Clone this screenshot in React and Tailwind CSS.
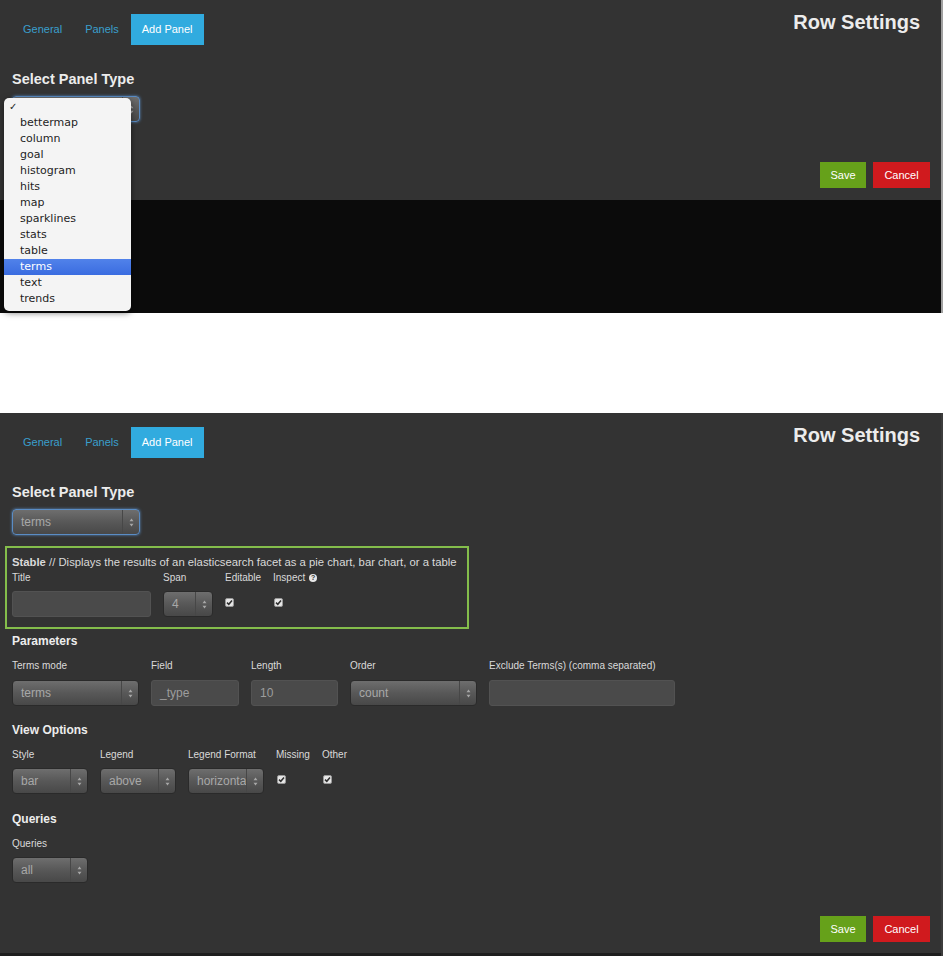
import React from "react";

const tabs = ["General", "Panels", "Add Panel"];
const panelTypes = [
  "bettermap",
  "column",
  "goal",
  "histogram",
  "hits",
  "map",
  "sparklines",
  "stats",
  "table",
  "terms",
  "text",
  "trends",
];

function Tabs() {
  return (
    <div className="flex gap-px">
      {tabs.map((t) => (
        <div
          key={t}
          className={`h-[31px] px-[11px] flex items-center text-[11px] ${
            t === "Add Panel" ? "bg-[#31abdf] text-white" : "text-[#3a9fcd]"
          }`}
        >
          {t}
        </div>
      ))}
    </div>
  );
}

function Header() {
  return (
    <div className="flex justify-between items-start">
      <Tabs />
      <h3 className="mr-[10px] -mt-[4px] text-[20px] leading-[24px] font-bold text-[#ececec]">
        Row Settings
      </h3>
    </div>
  );
}

function Arrows() {
  return (
    <svg width="5" height="9" viewBox="0 0 5 9">
      <path d="M2.5 0.5 L4.5 3.3 L0.5 3.3 Z" fill="#a8a8a8" />
      <path d="M2.5 8.5 L4.5 5.7 L0.5 5.7 Z" fill="#a8a8a8" />
    </svg>
  );
}

function Select({ value, className = "", focus = false }) {
  return (
    <div
      className={`flex items-stretch h-[26px] rounded-[4px] border overflow-hidden ${
        focus ? "border-[#5a8cc4] shadow-[0_0_3px_#5a8cc4]" : "border-[#2a2a2a]"
      } bg-linear-to-b from-[#6e6e6e] via-[#585858] to-[#484848] ${className}`}
    >
      <span className="flex-1 min-w-0 whitespace-nowrap pl-[8px] text-[12px] leading-[24px] text-[#a8a8a8]">
        {value}
      </span>
      <span className="w-[17px] shrink-0 border-l border-[#474747] flex items-center justify-center">
        <Arrows />
      </span>
    </div>
  );
}

function Input({ value = "", className = "" }) {
  return (
    <div
      className={`h-[26px] rounded-[3px] border border-[#525252] bg-[#4a4a4a] pl-[8px] text-[12px] leading-[24px] text-[#9d9d9d] ${className}`}
    >
      {value}
    </div>
  );
}

function Check() {
  return (
    <svg width="9" height="9" viewBox="0 0 9 9">
      <rect x="0.5" y="0.5" width="8" height="8" rx="1.5" fill="#e6e6e6" stroke="#9a9a9a" />
      <path d="M2 4.6 L3.8 6.3 L7 2.5" stroke="#2e2e2e" strokeWidth="1.5" fill="none" />
    </svg>
  );
}

function Label({ children }) {
  return <div className="text-[10px] leading-[14px] text-[#dadada] whitespace-nowrap">{children}</div>;
}

function Field({ label, width, gap = "mt-[7px]", children }) {
  return (
    <div className={width}>
      <Label>{label}</Label>
      <div className={gap}>{children}</div>
    </div>
  );
}

function CheckField({ label, width, offset, gap = "mt-[7px]" }) {
  return (
    <div className={width}>
      <Label>{label}</Label>
      <div className={`${gap} h-[26px] flex items-center pb-[4px] ${offset}`}>
        <Check />
      </div>
    </div>
  );
}

function Heading({ children, className = "" }) {
  return (
    <div className={`text-[12px] leading-[14px] font-bold text-[#ededed] ${className}`}>{children}</div>
  );
}

function Buttons({ className = "" }) {
  return (
    <div className={`flex justify-end gap-[7px] ${className}`}>
      <button className="w-[46px] h-[26px] bg-[#66a11a] text-white text-[11px]">Save</button>
      <button className="w-[57px] h-[26px] bg-[#d01a1e] text-white text-[11px]">Cancel</button>
    </div>
  );
}

function Menu() {
  return (
    <div className="absolute left-[4px] top-[98px] w-[127px] pt-[1px] pb-[4px] rounded-[5px] bg-[#f4f4f4] shadow-[0_2px_6px_rgba(0,0,0,0.5)] font-['DejaVu_Sans',sans-serif] text-[11px] text-[#1e1e1e]">
      <div className="h-[16px] leading-[16px] pl-[5px] text-[10px]">✓</div>
      {panelTypes.map((p) => (
        <div
          key={p}
          className={`h-[16px] leading-[16px] pl-[16px] ${
            p === "terms" ? "bg-linear-to-b from-[#5182ea] to-[#3a6ce0] text-white" : ""
          }`}
        >
          {p}
        </div>
      ))}
    </div>
  );
}

function TopPanel() {
  return (
    <div className="relative w-[943px] h-[313px] border-r-2 border-[#a0a0a0] flex flex-col">
      <div className="h-[200px] bg-[#333333] pl-3 pr-[11px] pt-[14px] flex flex-col">
        <Header />
        <div className="mt-[25px] text-[14.5px] leading-[18px] font-bold text-[#ececec]">
          Select Panel Type
        </div>
        <Select className="mt-[8px] w-[128px]" focus value="" />
        <Buttons className="mt-auto mb-[12px]" />
      </div>
      <div className="flex-1 bg-[#0b0b0b]" />
      <Menu />
    </div>
  );
}

function BottomPanel() {
  return (
    <div className="w-[943px] h-[543px] border-r-2 border-[#3c3c3c] flex flex-col">
      <div className="h-[540px] bg-[#333333] pl-3 pr-[11px] pt-[14px] flex flex-col">
        <Header />
        <div className="mt-[25px] text-[14.5px] leading-[18px] font-bold text-[#ececec]">
          Select Panel Type
        </div>
        <Select className="mt-[8px] w-[128px]" focus value="terms" />

        <div className="mt-[11px] -ml-[7px] w-[464px] h-[83px] border-2 border-[#84bd4b] pt-[7px] pl-[5px]">
          <div className="text-[11.3px] leading-[14px] text-[#dadada] whitespace-nowrap">
            <span className="font-bold">Stable</span> // Displays the results of an elasticsearch facet as a pie chart, bar chart, or a table
          </div>
          <div className="mt-[2px] flex gap-3">
            <Field label="Title" width="w-[139px]" gap="mt-[6px]">
              <Input />
            </Field>
            <Field label="Span" width="w-[50px]" gap="mt-[6px]">
              <Select value="4" />
            </Field>
            <CheckField label="Editable" width="w-[36px]" offset="pl-0" gap="mt-[6px]" />
            <div>
              <div className="flex items-center gap-[4px]">
                <Label>Inspect</Label>
                <span className="w-[8px] h-[8px] rounded-full bg-[#e8e8e8] text-[#333] text-[7px] leading-[8px] font-bold flex items-center justify-center">
                  ?
                </span>
              </div>
              <div className="mt-[6px] h-[26px] flex items-center pb-[4px] pl-[1px]">
                <Check />
              </div>
            </div>
          </div>
        </div>

        <Heading className="mt-[5px]">Parameters</Heading>
        <div className="mt-[11px] flex gap-3">
          <Field label="Terms mode" width="w-[127px]">
            <Select value="terms" />
          </Field>
          <Field label="Field" width="w-[88px]">
            <Input value="_type" />
          </Field>
          <Field label="Length" width="w-[87px]">
            <Input value="10" />
          </Field>
          <Field label="Order" width="w-[127px]">
            <Select value="count" />
          </Field>
          <Field label="Exclude Terms(s) (comma separated)" width="w-[186px]">
            <Input />
          </Field>
        </div>

        <Heading className="mt-[17px]">View Options</Heading>
        <div className="mt-[11px] flex gap-3">
          <Field label="Style" width="w-[76px]" gap="mt-[6px]">
            <Select value="bar" />
          </Field>
          <Field label="Legend" width="w-[76px]" gap="mt-[6px]">
            <Select value="above" />
          </Field>
          <Field label="Legend Format" width="w-[76px]" gap="mt-[6px]">
            <Select value="horizonta" />
          </Field>
          <CheckField label="Missing" width="w-[34px]" offset="pl-[1px]" gap="mt-[6px]" />
          <CheckField label="Other" width="w-[34px]" offset="pl-[1px]" gap="mt-[6px]" />
        </div>

        <Heading className="mt-[18px]">Queries</Heading>
        <div className="mt-[11px] flex">
          <Field label="Queries" width="w-[76px]" gap="mt-[6px]">
            <Select value="all" />
          </Field>
        </div>

        <Buttons className="mt-auto mb-[11px]" />
      </div>
      <div className="flex-1 bg-[#1e1e1e]" />
    </div>
  );
}

export default function App() {
  return (
    <div className="w-[943px] h-[956px] bg-white font-['Liberation_Sans',Arial,sans-serif] flex flex-col">
      <TopPanel />
      <div className="h-[100px]" />
      <BottomPanel />
    </div>
  );
}
